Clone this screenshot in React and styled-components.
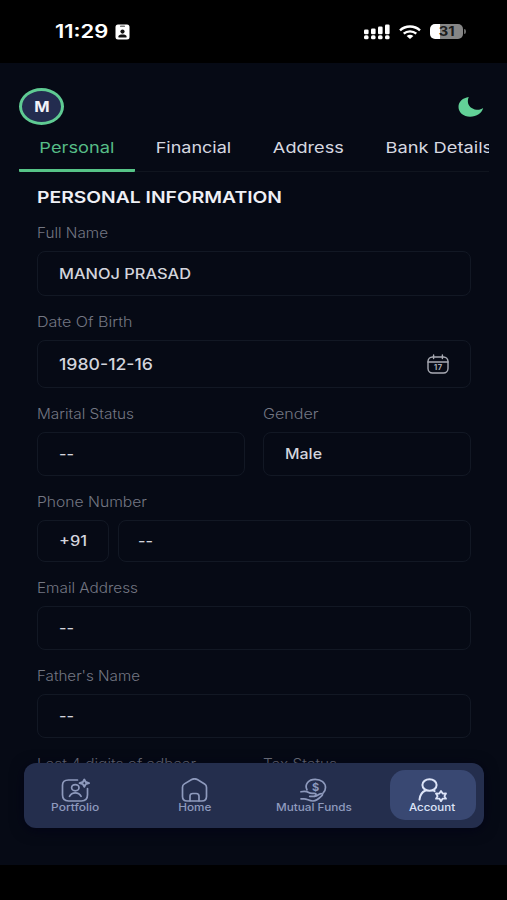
import { useState } from "react";
import styled, { createGlobalStyle } from "styled-components";

const GlobalStyle = createGlobalStyle`
  * {
    box-sizing: border-box;
  }

  body {
    margin: 0;
    background: #000;
    font-family: "Inter", "Liberation Sans", sans-serif;
  }
`;

const Screen = styled.div`
  width: 507px;
  height: 900px;
  display: flex;
  flex-direction: column;
  overflow: hidden;
  background: #000;
`;

const Wide = styled.span`
  display: inline-block;
  white-space: nowrap;
  transform: scaleX(${(props) => props.$k || 1.2});
  transform-origin: ${(props) => (props.$center ? "center" : "left")};
`;

const StatusBar = styled.div`
  height: 63px;
  flex: none;
  display: flex;
  align-items: center;
  padding: 0 41px 0 55px;
  color: #fff;
`;

const Clock = styled.div`
  width: 60px;
  font-size: 18px;
  font-weight: 600;
  line-height: 24px;
`;

const StatusIcons = styled.div`
  display: flex;
  align-items: center;
  gap: 9px;
  margin-left: auto;
`;

const Battery = styled.div`
  display: flex;
  align-items: center;
  gap: 1px;
`;

const Cell = styled.div`
  width: 33px;
  height: 15px;
  border-radius: 5px;
  background: linear-gradient(90deg, #fff 31%, #868686 31%);
  color: #1c1c1c;
  font-size: 12.5px;
  font-weight: 700;
  line-height: 15px;
  text-align: center;
`;

const Nub = styled.div`
  width: 2px;
  height: 5px;
  border-radius: 0 2px 2px 0;
  background: #6a6a6a;
`;

const Page = styled.main`
  position: relative;
  height: 802px;
  flex: none;
  display: flex;
  flex-direction: column;
  overflow: hidden;
  background: #060a15;
`;

const TopBar = styled.header`
  display: flex;
  justify-content: space-between;
  align-items: center;
  height: 37px;
  margin: 25px 23px 0 19px;
`;

const Avatar = styled.div`
  display: flex;
  align-items: center;
  justify-content: center;
  width: 45px;
  height: 37px;
  border: 3px solid #5fcb93;
  border-radius: 50%;
  background: #232c4f;
  color: #f1f2f8;
  font-size: 15px;
  font-weight: 700;
`;

const ThemeButton = styled.button`
  display: flex;
  padding: 0;
  border: none;
  background: none;
  cursor: pointer;
`;

const Tabs = styled.nav`
  display: flex;
  flex: none;
  height: 47px;
  margin: 0 18px 0 19px;
  overflow: hidden;
  box-shadow: inset 0 -1px 0 #10151f;
`;

const Tab = styled.button`
  flex: none;
  width: ${(props) => props.$w}px;
  padding: 2px 0 0;
  border: none;
  border-bottom: 3px solid ${(props) => (props.$active ? "#56c487" : "transparent")};
  border-radius: 1px;
  background: none;
  color: ${(props) => (props.$active ? "#56bd87" : "#d6d8e0")};
  font-family: inherit;
  font-size: 15px;
  line-height: 42px;
  text-align: center;
  cursor: pointer;
`;

const Form = styled.form`
  display: flex;
  flex-direction: column;
  gap: 15px;
  padding: 0 36px 0 37px;
`;

const Heading = styled.h2`
  margin: 13px 0 -2px;
  color: #eff0f6;
  font-size: 16px;
  font-weight: 600;
  line-height: 24px;
`;

const Pair = styled.div`
  display: grid;
  grid-template-columns: 1fr 1fr;
  gap: 18px;
`;

const FieldBox = styled.div`
  display: flex;
  flex-direction: column;
  gap: 9px;
`;

const Label = styled.label`
  height: 20px;
  color: #747783;
  font-size: 14px;
  font-weight: 300;
  line-height: 22px;
`;

const Inputs = styled.div`
  display: flex;
  gap: 9px;
`;

const Input = styled.div`
  display: flex;
  align-items: center;
  justify-content: space-between;
  flex: ${(props) => (props.$w ? "none" : 1)};
  width: ${(props) => (props.$w ? `${props.$w}px` : "auto")};
  height: ${(props) => props.$h || 44}px;
  padding: 0 21px 1px ${(props) => props.$pad || 21}px;
  border: 1px solid #121824;
  border-radius: 8px;
  color: #d3d5dd;
  font-size: ${(props) => props.$size || 14}px;
  font-weight: 500;
`;

const BottomNav = styled.nav`
  position: absolute;
  left: 24px;
  right: 23px;
  bottom: 37px;
  display: flex;
  justify-content: space-between;
  height: 65px;
  padding: 7px 8px 8px 9px;
  border-radius: 12px;
  background: #242e4d;
  box-shadow: 0 2px 14px rgba(3, 2, 22, 0.8);
`;

const NavItem = styled.a`
  display: flex;
  flex-direction: column;
  align-items: center;
  width: 86px;
  height: 50px;
  padding: 8px 1px 0 0;
  border-radius: 15px;
  background: ${(props) => (props.$active ? "#394872" : "transparent")};
  color: ${(props) => (props.$active ? "#dde4f8" : "#8e9abd")};
  font-size: 10.5px;
  font-weight: 500;
  line-height: 12px;
  cursor: pointer;

  svg {
    flex: none;
  }
`;

const stroke = {
  fill: "none",
  stroke: "currentColor",
  strokeWidth: 1.7,
  strokeLinecap: "round",
  strokeLinejoin: "round",
};

const BadgeIcon = () => (
  <svg width="15" height="16" viewBox="0 0 15 16">
    <rect x="0.5" y="0.5" width="14" height="15" rx="2.5" fill="#fff" />
    <rect x="5" y="1.6" width="5" height="1.5" rx="0.7" fill="#777" />
    <circle cx="7.5" cy="7.6" r="2.1" fill="#111" />
    <path d="M3.5 13.4v-1.2c0-1 1.6-1.7 4-1.7s4 .7 4 1.7v1.2z" fill="#111" />
  </svg>
);

const SignalIcon = () => (
  <svg width="26" height="16" viewBox="0 0 26 16" fill="#fff">
    {[5, 4, 2, 0].map((y, i) => (
      <g key={y}>
        <rect x={i * 7} y={y + 0.5} width="4.6" height={9.8 - y} rx="1.3" />
        <rect x={i * 7} y="11.3" width="4.6" height="4" rx="1.6" />
      </g>
    ))}
  </svg>
);

const WifiIcon = () => (
  <svg width="22" height="14" viewBox="0 0 22 14" fill="none" stroke="#fff" strokeWidth="2.4">
    <path d="M1 5.3C6.6 .2 15.4 .2 21 5.3" />
    <path d="M4.7 8.7c3.5-3.1 9.1-3.1 12.6 0" />
    <path d="M7.6 11c2-1.6 4.8-1.6 6.8 0L11 14z" fill="#fff" stroke="none" />
  </svg>
);

const MoonIcon = () => (
  <svg width="26" height="22" viewBox="0 0 26 22">
    <path
      d="M10.8 1C4.8 1.7 .5 5.8 .5 11c0 5.500 5 9.700 11.600 9.700 6.500 0 11.900-3.700 13.100-8.700-2.200 1.500-4.300 2-6.700 1.700-4.800-.5-8.300-3.600-8.600-7.700C9.800 4.200 10 2.700 10.800 1z"
      fill="#62d197"
    />
  </svg>
);

const CalendarText = styled.text`
  font-size: 7.5px;
  font-weight: 700;
  letter-spacing: 0.6px;
`;

const CalendarIcon = () => (
  <svg width="22" height="20" viewBox="0 0 22 20" color="#a9abb4">
    <g {...stroke} strokeWidth="1.4">
      <rect x="1" y="3" width="20" height="16" rx="4.5" />
      <path d="M1 8h20M6.6 1v3.6M15.4 1v3.6" />
    </g>
    <CalendarText x="11.3" y="16.2" textAnchor="middle" fill="currentColor">
      17
    </CalendarText>
  </svg>
);

const PortfolioIcon = () => (
  <svg width="29" height="24" viewBox="0 0 29 24" {...stroke}>
    <path d="M16.5 2H7.5C3.8 2 1.5 4 1.5 7.2v9.600C1.5 20.600 3.600 23 7.500 23h13c4 0 6-2.400 6-6.200v-6.300" />
    <ellipse cx="14.3" cy="9.7" rx="3.7" ry="3.1" />
    <path d="M8.5 18.3c1.200-2.300 3.200-3.400 5.800-3.400s4.600 1.100 5.800 3.400" />
    <path d="M23.3 1.500l1.400 2.500 3.300 1.100-3.300 1.100-1.400 2.500-1.400-2.500-3.300-1.100 3.300-1.100z" strokeWidth="1.9" />
  </svg>
);

const HomeIcon = () => (
  <svg width="27" height="24" viewBox="0 0 27 24" {...stroke}>
    <path d="M1.500 9.200c0-1.500.6-2.500 1.900-3.300l7.300-4.300c1.900-1.100 3.700-1.100 5.600 0l7.300 4.300c1.300.8 1.900 1.800 1.900 3.300v9.300c0 2.900-1.600 4.500-4.700 4.500H6.200c-3.100 0-4.700-1.600-4.700-4.500z" />
    <path d="M9 22.800v-4.600c0-1.700 1-2.700 2.800-2.700h3.400c1.800 0 2.800 1 2.800 2.700v4.600" />
  </svg>
);

const FundsText = styled.text`
  font-size: 11px;
  font-weight: 700;
`;

const FundsIcon = () => (
  <svg width="27" height="24" viewBox="0 0 27 24" {...stroke}>
    <path d="M7 11.800C4.200 6.300 8.700 1.300 15.200 1.300c5.900 0 10.300 3.500 10.300 8.200 0 2.400-1 4.300-2.500 5.600" />
    <path d="M1 13.800c3.400-.9 5.400-.7 7.700.7 1 .6 2 .8 3.400.8h2c2.600 0 2.700 3-.1 3H9.700" />
    <path d="M14.500 18.300c2.500-.2 3.700-1.200 5.300-2.300 1.700-1.200 3.700.3 2.100 1.700-3.300 3.400-5.400 5.300-8.900 5.300-4.300 0-5.600-2.200-9-2.200H1" />
    <FundsText x="15.600" y="12.700" textAnchor="middle" fill="currentColor" stroke="none">
      $
    </FundsText>
  </svg>
);

const AccountIcon = () => (
  <svg width="29" height="24" viewBox="0 0 29 24" {...stroke} strokeWidth="2">
    <ellipse cx="11.5" cy="7" rx="7.1" ry="5.8" />
    <path d="M1.500 21.700c.4-4.600 2.300-7.600 6-9.200M15 12.200l1.600 1" />
    <path
      d="M23 13l1.700 2.600 3.300-.1-1.600 2.600 1.600 2.600-3.300-.1L23 23.200l-1.700-2.600-3.300.1 1.600-2.600-1.600-2.600 3.300.1z"
      strokeWidth="1.800"
    />
  </svg>
);

const tabs = [
  { name: "Personal", w: 116, k: 1.215 },
  { name: "Financial", w: 117, k: 1.2 },
  { name: "Address", w: 113, k: 1.209 },
  { name: "Bank Details", w: 147, k: 1.216 },
];

const navItems = [
  { name: "Portfolio", k: 1.14, Icon: PortfolioIcon },
  { name: "Home", k: 1.12, Icon: HomeIcon },
  { name: "Mutual Funds", k: 1.12, Icon: FundsIcon },
  { name: "Account", k: 1.1, Icon: AccountIcon },
];

const Field = ({ label, k, children }) => (
  <FieldBox>
    <Label>
      <Wide $k={k}>{label}</Wide>
    </Label>
    <Inputs>{children}</Inputs>
  </FieldBox>
);

const App = () => {
  const [tab, setTab] = useState("Personal");
  const [page, setPage] = useState("Account");

  return (
    <Screen>
      <GlobalStyle />
      <StatusBar>
        <Clock>
          <Wide $k={1.22}>11:29</Wide>
        </Clock>
        <BadgeIcon />
        <StatusIcons>
          <SignalIcon />
          <WifiIcon />
          <Battery>
            <Cell>
              <Wide $k={1.18} $center>
                31
              </Wide>
            </Cell>
            <Nub />
          </Battery>
        </StatusIcons>
      </StatusBar>

      <Page>
        <TopBar>
          <Avatar>
            <Wide $k={1.1} $center>
              M
            </Wide>
          </Avatar>
          <ThemeButton type="button" aria-label="Toggle theme">
            <MoonIcon />
          </ThemeButton>
        </TopBar>

        <Tabs>
          {tabs.map(({ name, w, k }) => (
            <Tab key={name} $w={w} $active={tab === name} onClick={() => setTab(name)}>
              <Wide $k={k} $center>
                {name}
              </Wide>
            </Tab>
          ))}
        </Tabs>

        <Form>
          <Heading>
            <Wide $k={1.206}>PERSONAL INFORMATION</Wide>
          </Heading>
          <Field label="Full Name" k={1.09}>
            <Input $h={45}>
              <Wide $k={1.171}>MANOJ PRASAD</Wide>
            </Input>
          </Field>
          <Field label="Date Of Birth" k={1.147}>
            <Input $h={48} $size={16}>
              <Wide $k={1.104}>1980-12-16</Wide>
              <CalendarIcon />
            </Input>
          </Field>
          <Pair>
            <Field label="Marital Status" k={1.098}>
              <Input>
                <Wide $k={1.158}>--</Wide>
              </Input>
            </Field>
            <Field label="Gender" k={1.148}>
              <Input>
                <Wide $k={1.139}>Male</Wide>
              </Input>
            </Field>
          </Pair>
          <Field label="Phone Number" k={1.119}>
            <Input $h={42} $w={72}>
              <Wide $k={1.167}>+91</Wide>
            </Input>
            <Input $h={42} $pad={19}>
              <Wide $k={1.158}>--</Wide>
            </Input>
          </Field>
          <Field label="Email Address" k={1.094}>
            <Input>
              <Wide $k={1.158}>--</Wide>
            </Input>
          </Field>
          <Field label="Father's Name" k={1.083}>
            <Input>
              <Wide $k={1.158}>--</Wide>
            </Input>
          </Field>
          <Pair>
            <Label>
              <Wide $k={1.103}>Last 4 digits of adhaar</Wide>
            </Label>
            <Label>
              <Wide $k={1.098}>Tax Status</Wide>
            </Label>
          </Pair>
        </Form>

        <BottomNav>
          {navItems.map(({ name, k, Icon }) => (
            <NavItem key={name} $active={page === name} onClick={() => setPage(name)}>
              <Icon />
              <Wide $k={k} $center>
                {name}
              </Wide>
            </NavItem>
          ))}
        </BottomNav>
      </Page>
    </Screen>
  );
};

export default App;
